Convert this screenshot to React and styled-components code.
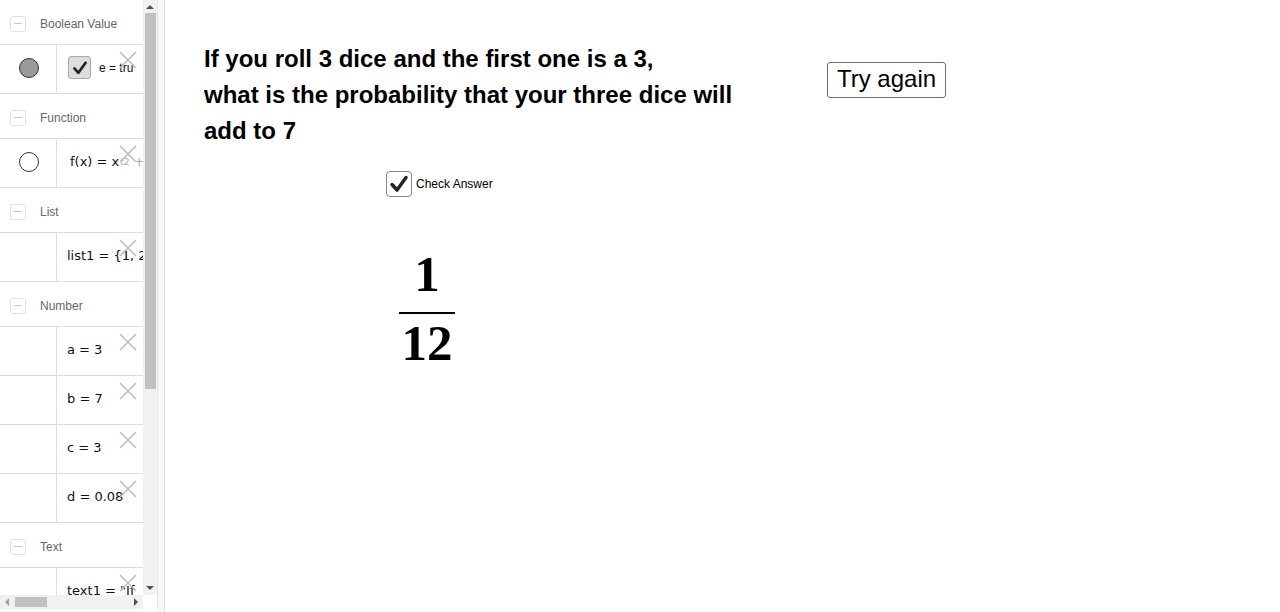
import React from "react"
import styled, { createGlobalStyle } from "styled-components"

const GlobalStyle = createGlobalStyle`
  html, body {
    margin: 0;
    padding: 0;
    background: #fff;
    overflow: hidden;
  }
  body {
    font-family: "Liberation Sans", Arial, sans-serif;
  }
`

const Page = styled.div`
  display: flex;
  width: 1280px;
  height: 612px;
  background: #fff;
`

const AlgebraPanel = styled.div`
  width: 157px;
  height: 609px;
  display: grid;
  grid-template-columns: 143px 14px;
  grid-template-rows: 595px 14px;
  border-right: 1px solid #e4e4e4;
`

const ListArea = styled.div`
  overflow: hidden;
  background: #fff;
`

const GroupHeader = styled.div`
  height: 45px;
  box-sizing: border-box;
  padding-top: 3px;
  display: flex;
  align-items: center;
  border-bottom: 1px solid #dcdcdc;
  font-size: 12px;
  color: #666;
`

const Collapse = styled.span`
  width: 14px;
  height: 14px;
  margin: 0 14px 0 10px;
  border: 1px solid #e2e2e2;
  border-radius: 3px;
  display: flex;
  align-items: center;
  justify-content: center;
  &::after {
    content: "";
    width: 8px;
    height: 1px;
    background: #c8c8c8;
  }
`

const Row = styled.div`
  position: relative;
  height: 48px;
  display: flex;
  border-bottom: 1px solid #dcdcdc;
`

const MarbleCell = styled.div`
  width: 57px;
  flex: none;
  box-sizing: border-box;
  padding-bottom: 3px;
  border-right: 1px solid #dcdcdc;
  display: flex;
  align-items: center;
  justify-content: center;
`

const Marble = styled.span`
  width: 18px;
  height: 18px;
  border-radius: 50%;
  border: 1px solid #333;
  background: ${p => (p.$filled ? "#999" : "#fff")};
  margin-left: 1px;
`

const Definition = styled.div`
  flex: 1;
  display: flex;
  align-items: center;
  box-sizing: border-box;
  padding-left: ${p => p.$pad || 10}px;
  padding-bottom: 3px;
  white-space: nowrap;
  overflow: hidden;
  font-family: ${p => (p.$math ? '"DejaVu Sans", sans-serif' : '"Liberation Sans", Arial, sans-serif')};
  font-size: ${p => (p.$math ? 13 : 12)}px;
  color: #111;
`

const MiniCheck = styled.span`
  width: 21px;
  height: 21px;
  flex: none;
  margin-right: 8px;
  border: 1px solid #aaa;
  border-radius: 3px;
  background: #ddd;
  display: flex;
  align-items: center;
  justify-content: center;
`

const Sup = styled.sup`
  font-size: 9px;
  color: #aaa;
  vertical-align: 7px;
  margin-left: 1px;
`

const Faint = styled.span`
  color: #aaa;
`

const Delete = styled.span`
  position: absolute;
  left: 119px;
  top: 6px;
  width: 18px;
  height: 18px;
`

const VScroll = styled.div`
  background: #f1f1f1;
  display: flex;
  flex-direction: column;
  align-items: center;
`

const Arrow = styled.span`
  width: 0;
  height: 0;
  border-left: 4px solid transparent;
  border-right: 4px solid transparent;
  ${p =>
    p.$dir === "up"
      ? "border-bottom: 4px solid #505050; margin: 5px 0 4px;"
      : "border-top: 4px solid #505050; margin: auto 0 5px;"}
`

const VThumb = styled.span`
  width: 11px;
  height: 376px;
  background: #c1c1c1;
  margin-left: 1px;
`

const HScroll = styled.div`
  background: #f1f1f1;
  display: flex;
  align-items: center;
  padding: 0 5px;
`

const HArrow = styled.span`
  width: 0;
  height: 0;
  border-top: 4px solid transparent;
  border-bottom: 4px solid transparent;
  ${p =>
    p.$dir === "left"
      ? "border-right: 4px solid #a0a0a0; margin-right: 6px;"
      : "border-left: 4px solid #505050; margin-left: auto;"}
`

const HThumb = styled.span`
  width: 32px;
  height: 10px;
  background: #c1c1c1;
`

const Corner = styled.div`
  background: #fff;
`

const Splitter = styled.div`
  width: 6px;
  height: 612px;
  background: #f7f7f7;
  border-right: 1px solid #dadada;
`

const Canvas = styled.div`
  position: relative;
  flex: 1;
  height: 612px;
  background: #fff;
`

const Question = styled.div`
  position: absolute;
  left: 39px;
  top: 41px;
  font-family: "Liberation Sans", Arial, sans-serif;
  font-weight: bold;
  font-size: 24px;
  line-height: 36px;
  color: #000;
`

const TryButton = styled.button`
  position: absolute;
  left: 662px;
  top: 62px;
  width: 119px;
  height: 36px;
  padding: 0 0 2px;
  background: #fff;
  border: 1px solid #6f6f6f;
  border-radius: 3px;
  font-family: "Liberation Sans", Arial, sans-serif;
  font-size: 24px;
  color: #000;
`

const CheckLabel = styled.label`
  position: absolute;
  left: 221px;
  top: 171px;
  display: flex;
  align-items: center;
  gap: 4px;
  font-family: "Liberation Sans", Arial, sans-serif;
  font-size: 12px;
  color: #000;
`

const BigCheck = styled.span`
  width: 24px;
  height: 24px;
  border: 1px solid #888;
  border-radius: 4px;
  background: #fff;
  display: flex;
  align-items: center;
  justify-content: center;
`

const Fraction = styled.div`
  position: absolute;
  left: 234px;
  top: 248px;
  width: 56px;
  display: flex;
  flex-direction: column;
  align-items: center;
  font-family: "Liberation Serif", "Times New Roman", serif;
  font-weight: bold;
  font-size: 51px;
  line-height: 52px;
  color: #000;
`

const Bar = styled.span`
  width: 56px;
  height: 2px;
  background: #000;
  margin: 12px 0 3px;
`

const Tick = ({ size }) => (
  <svg width={size} height={size} viewBox="0 0 20 20">
    <path d="M3 10.5 L8 16 L17 3.5" fill="none" stroke="#222" strokeWidth="3.4" strokeLinecap="round" strokeLinejoin="round" />
  </svg>
)

const Cross = () => (
  <Delete>
    <svg width="18" height="18" viewBox="0 0 18 18">
      <path d="M1 1 L17 17 M17 1 L1 17" stroke="#bdbdbd" strokeWidth="1.6" fill="none" />
    </svg>
  </Delete>
)

const Header = ({ title }) => (
  <GroupHeader>
    <Collapse />
    {title}
  </GroupHeader>
)

const Item = ({ marble, children, math, pad }) => (
  <Row>
    <MarbleCell>{marble}</MarbleCell>
    <Definition $math={math} $pad={pad}>{children}</Definition>
    <Cross />
  </Row>
)

export default function App() {
  return (
    <>
      <GlobalStyle />
      <Page>
        <AlgebraPanel>
          <ListArea>
            <Header title="Boolean Value" />
            <Item marble={<Marble $filled />} pad={11}>
              <MiniCheck>
                <Tick size={16} />
              </MiniCheck>
              e = tru
            </Item>
            <Header title="Function" />
            <Item marble={<Marble />} pad={13} math>
              f(x) = x<Sup>t2</Sup>
              <Faint>&nbsp;+</Faint>
            </Item>
            <Header title="List" />
            <Item math>list1 = {"{"}1, 2,</Item>
            <Header title="Number" />
            <Item math>a = 3</Item>
            <Item math>b = 7</Item>
            <Item math>c = 3</Item>
            <Item math>d = 0.08</Item>
            <Header title="Text" />
            <Item math>text1 = "If</Item>
          </ListArea>
          <VScroll>
            <Arrow $dir="up" />
            <VThumb />
            <Arrow $dir="down" />
          </VScroll>
          <HScroll>
            <HArrow $dir="left" />
            <HThumb />
            <HArrow $dir="right" />
          </HScroll>
          <Corner />
        </AlgebraPanel>
        <Splitter />
        <Canvas>
          <Question>
            If you roll 3 dice and the first one is a 3,
            <br />
            what is the probability that your three dice will
            <br />
            add to 7
          </Question>
          <TryButton>Try again</TryButton>
          <CheckLabel>
            <BigCheck>
              <Tick size={20} />
            </BigCheck>
            Check Answer
          </CheckLabel>
          <Fraction>
            <span>1</span>
            <Bar />
            <span>12</span>
          </Fraction>
        </Canvas>
      </Page>
    </>
  )
}
